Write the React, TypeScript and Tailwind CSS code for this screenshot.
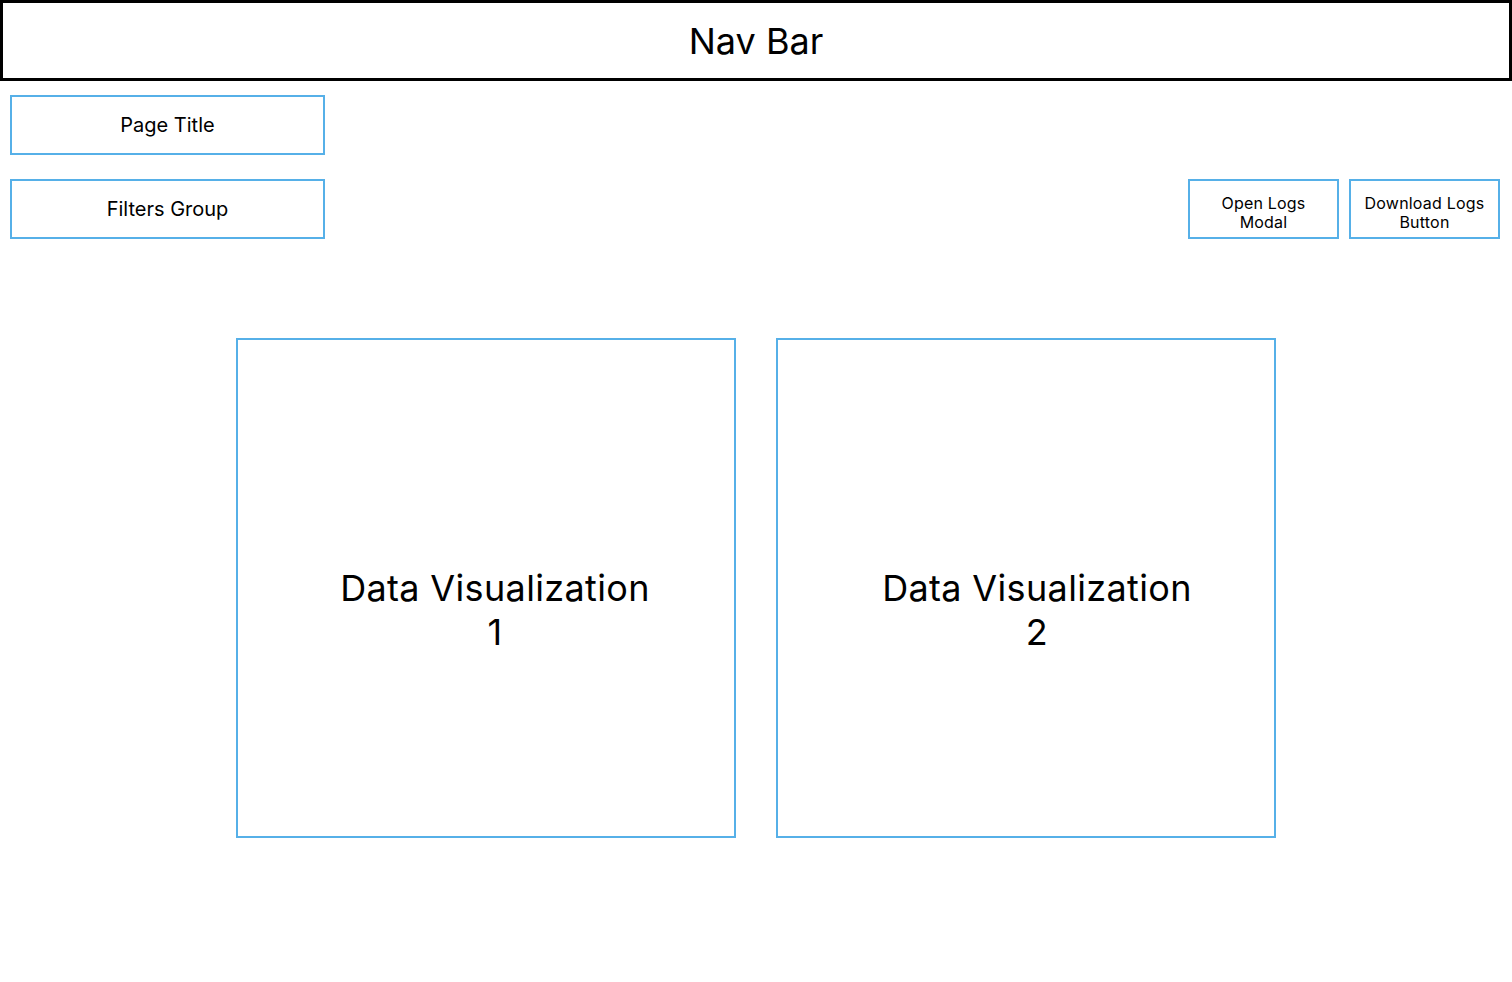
import React from 'react';

const font = { fontFamily: 'Inter, "Noto Sans", sans-serif' };

const Box: React.FC<{ className?: string; children: React.ReactNode }> = ({ className = '', children }) => (
    <div className={`flex items-center justify-center border-2 border-[#56b0e8] text-center text-black ${className}`}>
        {children}
    </div>
);

export default function App() {
    return (
        <div className="min-h-[982px] w-[1512px] bg-white" style={font}>
            {/* Nav */}
            <div className="flex h-[81px] items-center justify-center border-[3px] border-black text-[36px] leading-none text-black">
                Nav Bar
            </div>

            {/* Header area */}
            <div className="flex flex-col gap-[24px] pl-[10px] pr-[12px] pt-[14px]">
                <Box className="h-[60px] w-[315px] text-[20px]">Page Title</Box>
                <div className="flex items-center justify-between">
                    <Box className="h-[60px] w-[315px] text-[20px]">Filters Group</Box>
                    <div className="flex gap-[10px]">
                        <Box className="h-[60px] w-[151px] pt-[7px] text-[16px] leading-[19px] tracking-[0.2px]">
                            Open Logs
                            <br />
                            Modal
                        </Box>
                        <Box className="h-[60px] w-[151px] pt-[7px] text-[16px] leading-[19px] tracking-[0.2px]">
                            Download Logs
                            <br />
                            Button
                        </Box>
                    </div>
                </div>
            </div>

            {/* Visualizations */}
            <div className="mt-[99px] flex justify-center gap-[40px]">
                <Box className="h-[500px] w-[500px] pl-[18px] pt-[43px] text-[36px] leading-[44px] tracking-[0.35px]">
                    Data Visualization
                    <br />1
                </Box>
                <Box className="h-[500px] w-[500px] pl-[22px] pt-[43px] text-[36px] leading-[44px] tracking-[0.35px]">
                    Data Visualization
                    <br />2
                </Box>
            </div>
        </div>
    );
}
